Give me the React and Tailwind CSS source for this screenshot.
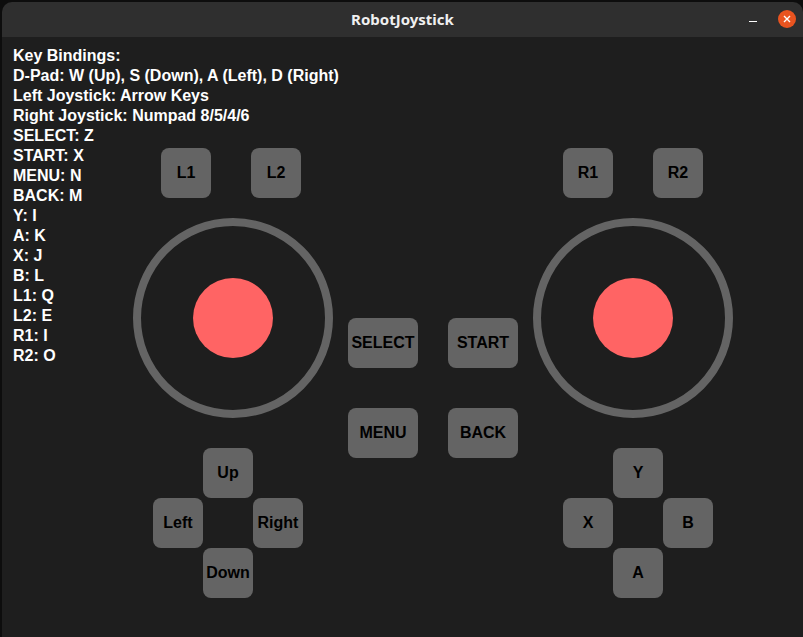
const bindings = [
  "Key Bindings:",
  "D-Pad: W (Up), S (Down), A (Left), D (Right)",
  "Left Joystick: Arrow Keys",
  "Right Joystick: Numpad 8/5/4/6",
  "SELECT: Z",
  "START: X",
  "MENU: N",
  "BACK: M",
  "Y: I",
  "A: K",
  "X: J",
  "B: L",
  "L1: Q",
  "L2: E",
  "R1: I",
  "R2: O",
];

function Btn({ label, wide }) {
  return (
    <div className={`flex items-center justify-center h-[50px] ${wide ? "w-[70px]" : "w-[50px]"} bg-[#646464] rounded-[8px] text-black text-[16px] font-bold`}>
      {label}
    </div>
  );
}

function Stick() {
  return (
    <div className="flex items-center justify-center w-[200px] h-[200px] rounded-full border-[8px] border-[#646464]">
      <div className="w-[80px] h-[80px] rounded-full bg-[#ff6464]" />
    </div>
  );
}

function Cross({ up, left, right, down }) {
  return (
    <div className="grid grid-cols-[50px_50px_50px] grid-rows-[50px_50px_50px] w-[150px]">
      <div />
      <Btn label={up} />
      <div />
      <Btn label={left} />
      <div />
      <Btn label={right} />
      <div />
      <Btn label={down} />
      <div />
    </div>
  );
}

export default function App() {
  return (
    <div className="w-[803px] h-[637px] bg-[#0d0d0d] overflow-hidden" style={{ fontFamily: '"Liberation Sans", Arial, sans-serif' }}>
      <div className="ml-[2px] mt-[2px] w-[801px] h-[635px] rounded-t-[10px] overflow-hidden flex flex-col">
        {/* Title bar */}
        <div className="relative flex items-center justify-center h-[35px] bg-[#2f2f2f] shrink-0">
          <span className="text-[15px] font-bold text-[#f0f0f0]" style={{ fontFamily: '"Noto Sans", "DejaVu Sans", sans-serif' }}>
            RobotJoystick
          </span>
          <div className="absolute right-[7px] top-[8px] flex items-center gap-[21px]">
            <div className="w-[8px] h-[1px] mt-[4px] bg-white" />
            <div className="flex items-center justify-center w-[18px] h-[18px] rounded-full bg-[#e95420]">
              <svg width="8" height="8" viewBox="0 0 8 8">
                <path d="M1 1L7 7M7 1L1 7" stroke="white" strokeWidth="1.4" />
              </svg>
            </div>
          </div>
        </div>

        {/* Canvas */}
        <div className="relative flex-1 bg-[#1e1e1e]">
          <div className="pl-[11px] pt-[9px] text-[16px] leading-[20px] font-bold text-white">
            {bindings.map((b) => (
              <div key={b}>{b}</div>
            ))}
          </div>

          <div className="absolute left-[131px] top-[111px] flex">
            {/* Left side */}
            <div className="flex flex-col w-[200px]">
              <div className="flex gap-[40px] pl-[28px]">
                <Btn label="L1" />
                <Btn label="L2" />
              </div>
              <div className="mt-[20px]">
                <Stick />
              </div>
              <div className="mt-[30px] pl-[20px]">
                <Cross up="Up" left="Left" right="Right" down="Down" />
              </div>
            </div>

            {/* Center */}
            <div className="ml-[15px] pt-[170px] grid grid-cols-[70px_70px] gap-x-[30px] gap-y-[40px] h-fit">
              <Btn label="SELECT" wide />
              <Btn label="START" wide />
              <Btn label="MENU" wide />
              <Btn label="BACK" wide />
            </div>

            {/* Right side */}
            <div className="ml-[15px] flex flex-col w-[200px]">
              <div className="flex gap-[40px] pl-[30px]">
                <Btn label="R1" />
                <Btn label="R2" />
              </div>
              <div className="mt-[20px]">
                <Stick />
              </div>
              <div className="mt-[30px] pl-[30px]">
                <Cross up="Y" left="X" right="B" down="A" />
              </div>
            </div>
          </div>
        </div>
      </div>
    </div>
  );
}
